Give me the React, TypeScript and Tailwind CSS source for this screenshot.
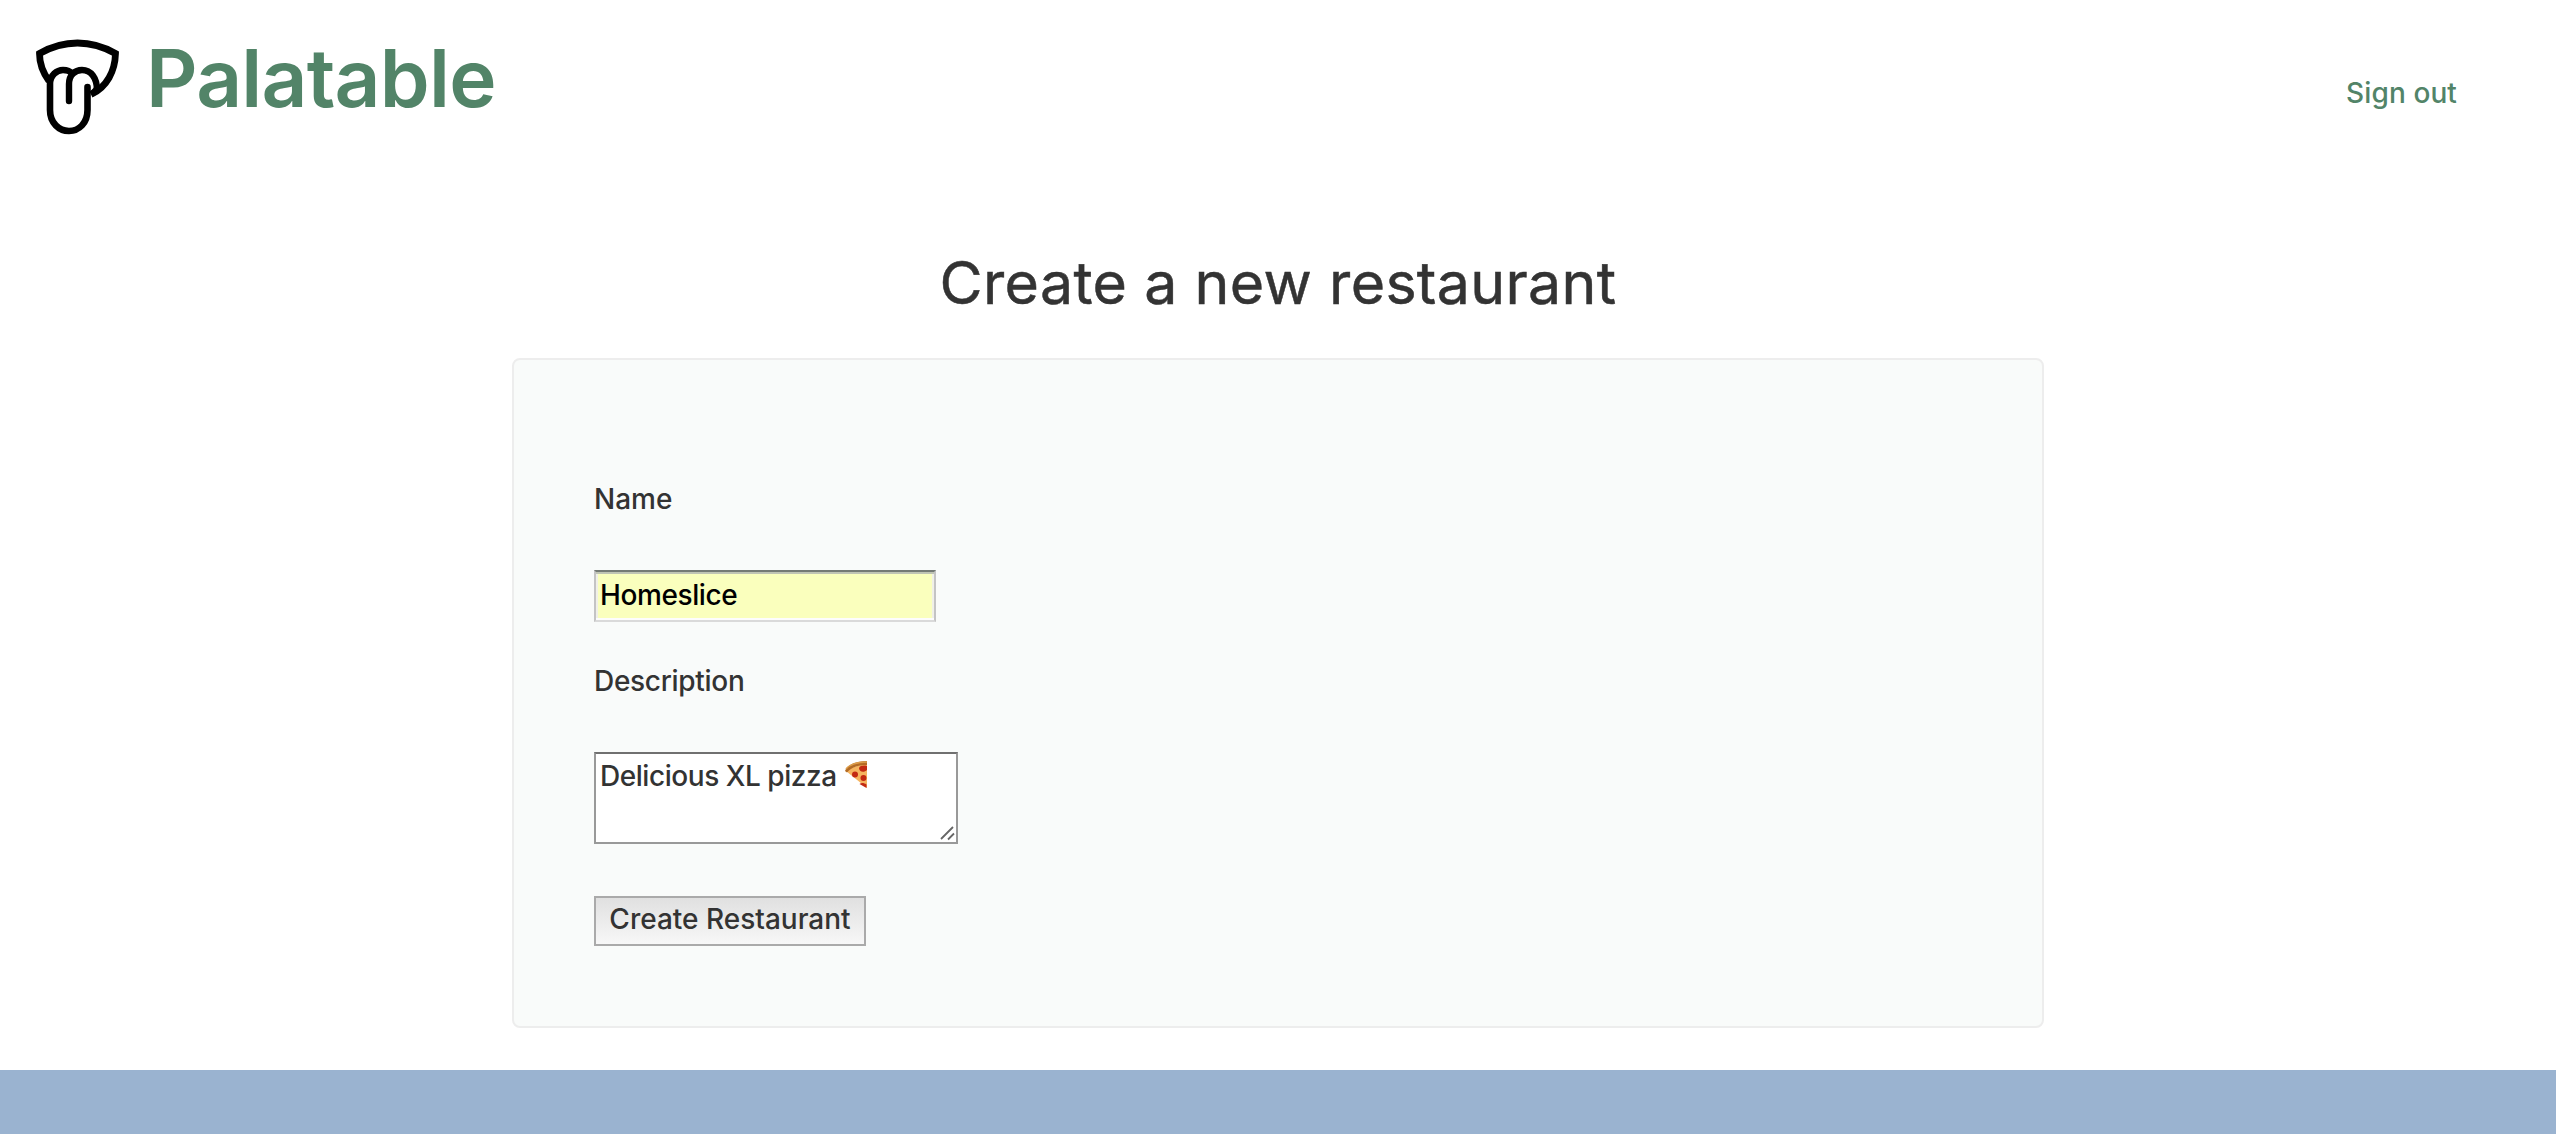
function LogoMark() {
  return (
    <svg className="block h-24 w-21" viewBox="36 39 84 96" fill="none" stroke="#000" strokeLinecap="round" strokeLinejoin="round">
      <path d="M49 81 C42.500 72 39.5 64 39.5 53.5 C64 39.5 91 39.5 115.5 53.5 C115 71 107 87 91 94.5" strokeWidth="6.8" strokeLinejoin="miter" strokeLinecap="butt" />
      <path d="M69 101 V84 C69 75 75 70 82 70 C91 70 97 78 97 90" strokeWidth="6.400" />
      <path d="M87.500 87 V110 C87.500 123 79 131 69 131 C59 131 50 123 50 110 V84 C50 75 57 70 63 70 C67 70 70 71 72 73.500" strokeWidth="6.600" />
      <path d="M93 92 L96 89" strokeWidth="5" />
    </svg>
  );
}

function Pizza() {
  return (
    <svg className="ml-[7px] mt-[6px] block h-[29px] w-6 shrink-0" viewBox="0 0 24 29">
      <path d="M2 11 C8 7 15 5 23 4 V28 Z" fill="#f6b45f" />
      <path d="M1 11 C4 4 13 1 23 1 V5 C14 5 8 7 3 12.500 Z" fill="#b36b24" />
      <path d="M2 9 C7 3 15 2 23 2" fill="none" stroke="#dc9d4b" strokeWidth="1.500" />
      <g fill="#c32a12">
        <circle cx="11" cy="14.500" r="3" />
        <path d="M15 8 C16 5.500 20 5 23 6 V10 C20 13 15 12 15 8 Z" />
        <circle cx="19.500" cy="18" r="3" />
        <path d="M15.500 24 C17 22.500 20 22.500 22.500 24.500 V28 Z" />
      </g>
    </svg>
  );
}

export default function App() {
  return (
    <div className="flex h-[1134px] flex-col bg-white font-['Inter',sans-serif] text-[28px] leading-8 text-[#333]">
      <header className="flex h-[240px] shrink-0 items-start justify-between pl-9 pr-[99px]">
        <a className="flex items-start text-[#528468]" href="#">
          <span className="mt-[39px]"><LogoMark /></span>
          <h1 className="ml-[26px] mt-[28px] whitespace-nowrap text-[80px] font-semibold leading-[100px] tracking-[-0.75px]">Palatable</h1>
        </a>
        <a className="mt-[77px] whitespace-nowrap font-medium tracking-[0.1px] text-[#528468]" href="#">Sign out</a>
      </header>
      <h2 className="h-[118px] shrink-0 whitespace-nowrap text-center text-[59px] font-normal leading-[86px] tracking-[0.35px] [-webkit-text-stroke:0.5px_#333]">Create a new restaurant</h2>
      <main className="mx-auto flex h-[670px] w-[1532px] shrink-0 flex-col items-start rounded-lg border-2 border-[#ededed] bg-[#f9fbfa] pl-20 font-medium">
        <label className="mt-[123px] h-8">Name</label>
        <div className="mt-[55px] flex h-[52px] w-[342px] items-center border-2 border-[#c4c4c4] border-b-[#dadada] border-t-[#747a74] bg-[#faffbd] pb-[3px] pl-1 tracking-[-0.4px] text-black shadow-[inset_0_2px_0_#bfc4b4,inset_0_-2px_0_#fdfdfd,inset_2px_0_0_#f0f0e8,inset_-2px_0_0_#f0f0e8]">Homeslice</div>
        <label className="mt-[43px] h-8 tracking-[-0.3px]">Description</label>
        <div className="relative mt-[55px] flex h-[92px] w-[364px] border-2 border-[#999] border-t-[#707070] bg-white pl-1">
          <span className="mt-[6px] whitespace-nowrap tracking-[-0.45px]">Delicious XL pizza</span>
          <Pizza />
          <svg className="absolute bottom-px right-px h-4 w-4" viewBox="0 0 16 16" stroke="#666" strokeWidth="1.800"><path d="M2 14 L14 2 M9 14.500 L15 8.500" /></svg>
        </div>
        <button className="mt-[52px] h-[50px] w-[272px] whitespace-nowrap border-2 border-[#aaa] bg-linear-to-b from-[#e0e0e0] to-[#f7f7f7] pb-[5px]">Create Restaurant</button>
      </main>
      <footer className="mt-[42px] h-16 shrink-0 bg-[#9ab3d0]" />
    </div>
  );
}
